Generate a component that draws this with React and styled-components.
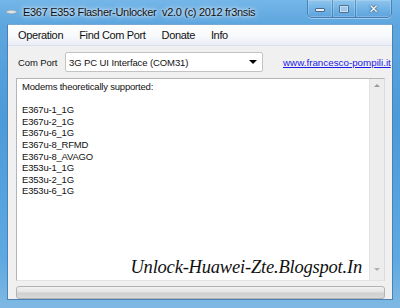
import styled, { createGlobalStyle } from 'styled-components';

const GlobalStyle = createGlobalStyle`
  html, body {
    margin: 0;
    padding: 0;
    background: #3b8fd6;
  }
  * {
    box-sizing: border-box;
  }
`;

const modems = [
  'E367u-1_1G',
  'E367u-2_1G',
  'E367u-6_1G',
  'E367u-8_RFMD',
  'E367u-8_AVAGO',
  'E353u-1_1G',
  'E353u-2_1G',
  'E353u-6_1G',
];

const menuItems = ['Operation', 'Find Com Port', 'Donate', 'Info'];

const App = () => {
  return (
    <>
      <GlobalStyle />
      <WindowFrame>
        <TitleBar>
          <AppIcon viewBox="0 0 14 8">
            <path d="M1 4 C3 1.5 9 1.5 13 3.5 C11 6.5 4 6.5 1 4 Z" fill="#f4f6f8" stroke="#8796a6" strokeWidth="0.7" />
            <path d="M3 4 L11 3.8" stroke="#b7c2cc" strokeWidth="0.8" />
          </AppIcon>
          <Title>E367 E353 Flasher-Unlocker&nbsp; v2.0 (c) 2012 fr3nsis</Title>
          <CaptionGroup>
            <CaptionButton $width={25}>
              <MinGlyph />
            </CaptionButton>
            <CaptionButton $width={23}>
              <MaxGlyph />
            </CaptionButton>
            <CaptionButton $width={35} $last>
              <CloseGlyph>✕</CloseGlyph>
            </CaptionButton>
          </CaptionGroup>
        </TitleBar>

        <ClientArea>
          <MenuBar>
            {menuItems.map((item, index) => (
              <MenuItem key={index}>{item}</MenuItem>
            ))}
          </MenuBar>

          <PortRow>
            <PortLabel>Com Port</PortLabel>
            <ComboBox>
              <span>3G PC UI Interface (COM31)</span>
              <ComboArrow />
            </ComboBox>
            <SiteLink href="#">www.francesco-pompili.it</SiteLink>
          </PortRow>

          <LogBox>
            <LogText>
              <div>Modems theoretically supported:</div>
              <BlankLine />
              {modems.map((m, index) => (
                <div key={index}>{m}</div>
              ))}
            </LogText>
            <ScrollTrack>
              <ScrollArrow $up />
              <ScrollArrow />
            </ScrollTrack>
            <Watermark>Unlock-Huawei-Zte.Blogspot.In</Watermark>
          </LogBox>

          <ProgressBar />
        </ClientArea>
      </WindowFrame>
    </>
  );
};

export default App;

const WindowFrame = styled.div`
  display: flex;
  flex-direction: column;
  width: 400px;
  height: 308px;
  overflow: hidden;
  background: linear-gradient(180deg, #74b6e8 0px, #5ea6df 24px, #4c9ad8 120px, #5fa9e2 260px, #7fb9e3 308px);
`;

const TitleBar = styled.div`
  display: flex;
  align-items: flex-start;
  height: 24px;
  padding-left: 5px;
`;

const AppIcon = styled.svg`
  width: 13px;
  height: 8px;
  margin-top: 8px;
  margin-right: 5px;
`;

const Title = styled.div`
  font-family: 'Liberation Sans', Arial, sans-serif;
  font-size: 11px;
  letter-spacing: -0.3px;
  line-height: 24px;
  color: #111;
  white-space: nowrap;
  text-shadow: 0 0 6px rgba(255, 255, 255, 0.9), 0 0 3px rgba(255, 255, 255, 0.9);
`;

const CaptionGroup = styled.div`
  display: flex;
  margin-left: auto;
  margin-right: 8px;
  height: 18px;
  border: 1px solid rgba(40, 80, 130, 0.5);
  border-top: none;
  border-radius: 0 0 5px 5px;
  overflow: hidden;
  box-shadow: 0 1px 0 rgba(255, 255, 255, 0.4);
`;

const CaptionButton = styled.div`
  display: flex;
  align-items: center;
  justify-content: center;
  width: ${props => props.$width}px;
  height: 100%;
  background: linear-gradient(180deg, rgba(255, 255, 255, 0.2), rgba(255, 255, 255, 0.04) 50%, rgba(40, 110, 180, 0.12));
  border-right: ${props => (props.$last ? 'none' : '1px solid rgba(40, 80, 130, 0.4)')};
  box-shadow: inset 0 0 0 1px rgba(255, 255, 255, 0.2);
`;

const MinGlyph = styled.div`
  width: 10px;
  height: 4px;
  margin-top: 3px;
  background: #e8eef4;
  border: 1px solid #4a6a8c;
  border-radius: 1px;
`;

const MaxGlyph = styled.div`
  width: 10px;
  height: 8px;
  border: 1px solid #4f7396;
  background: #9fc6e8;
  box-shadow: inset 0 0 0 1px #c8dff2;
  border-radius: 1px;
`;

const CloseGlyph = styled.span`
  font-family: 'DejaVu Sans', sans-serif;
  font-size: 12px;
  font-weight: 700;
  line-height: 1;
  color: #fff;
  text-shadow: 0 0 1px #2a4a6c, 0 0 2px #2a4a6c;
`;

const ClientArea = styled.div`
  display: flex;
  flex-direction: column;
  flex: 1;
  margin: 0 7px 8px 7px;
  background: #f0f0f0;
  border: 1px solid #4a82b4;
  border-top-color: #7aa8d0;
`;

const MenuBar = styled.div`
  display: flex;
  align-items: center;
  height: 21px;
  padding-left: 2px;
  background: linear-gradient(180deg, #ffffff, #f6f8fb 60%, #e9eef5);
  border-bottom: 1px solid #d9e2ec;
`;

const MenuItem = styled.div`
  padding: 0 8px;
  font-family: 'Liberation Sans', Arial, sans-serif;
  font-size: 11px;
  letter-spacing: -0.35px;
  color: #111;
`;

const PortRow = styled.div`
  display: flex;
  align-items: center;
  height: 32px;
  padding: 0 0 0 10px;
`;

const PortLabel = styled.div`
  flex-shrink: 0;
  width: 47px;
  font-family: 'Liberation Sans', Arial, sans-serif;
  font-size: 9.5px;
  letter-spacing: -0.1px;
  white-space: nowrap;
  color: #111;
`;

const ComboBox = styled.div`
  display: flex;
  flex-shrink: 0;
  align-items: center;
  justify-content: space-between;
  width: 198px;
  height: 20px;
  padding: 0 5px 0 3px;
  background: #fff;
  border: 1px solid #c3c3c3;
  border-radius: 2px;
  font-family: 'Liberation Sans', Arial, sans-serif;
  font-size: 9.5px;
  letter-spacing: -0.1px;
  color: #111;
`;

const ComboArrow = styled.div`
  width: 0;
  height: 0;
  border-left: 4px solid transparent;
  border-right: 4px solid transparent;
  border-top: 4px solid #000;
`;

const SiteLink = styled.a`
  margin-left: 20px;
  font-family: 'Liberation Sans', Arial, sans-serif;
  font-size: 9.8px;
  color: #1a1ae6;
  text-decoration: underline;
  white-space: nowrap;
`;

const LogBox = styled.div`
  position: relative;
  display: flex;
  height: 203px;
  margin: 0 7px 0 8px;
  background: #fff;
  border: 1px solid #b5b5b5;
  border-right-color: #dcdcdc;
  border-bottom-color: #e3e3e3;
`;

const LogText = styled.div`
  flex: 1;
  padding: 2px 0 0 5px;
  font-family: 'Liberation Sans', Arial, sans-serif;
  font-size: 9.5px;
  letter-spacing: -0.2px;
  line-height: 11.6px;
  color: #111;
`;

const BlankLine = styled.div`
  height: 11.6px;
`;

const ScrollTrack = styled.div`
  display: flex;
  flex-direction: column;
  justify-content: space-between;
  align-items: center;
  width: 15px;
  padding: 5px 0 9px;
  background: #ededed;
  border-left: 1px solid #e2e2e2;
`;

const ScrollArrow = styled.div`
  width: 0;
  height: 0;
  border-left: 3px solid transparent;
  border-right: 3px solid transparent;
  ${props =>
    props.$up
      ? 'border-bottom: 3px solid #9a9a9a;'
      : 'border-top: 3px solid #b0b0b0;'}
`;

const Watermark = styled.div`
  position: absolute;
  right: 22px;
  bottom: 2px;
  font-family: 'Liberation Serif', 'DejaVu Serif', serif;
  font-style: italic;
  font-size: 18.5px;
  letter-spacing: -0.2px;
  color: #111;
  white-space: nowrap;
`;

const ProgressBar = styled.div`
  height: 13px;
  margin: 5px 7px 0 8px;
  border: 1px solid #b2b2b2;
  border-radius: 3px;
  background: linear-gradient(180deg, #f2f2f2 0%, #e4e4e4 45%, #cfcfcf 55%, #d8d8d8 100%);
`;
